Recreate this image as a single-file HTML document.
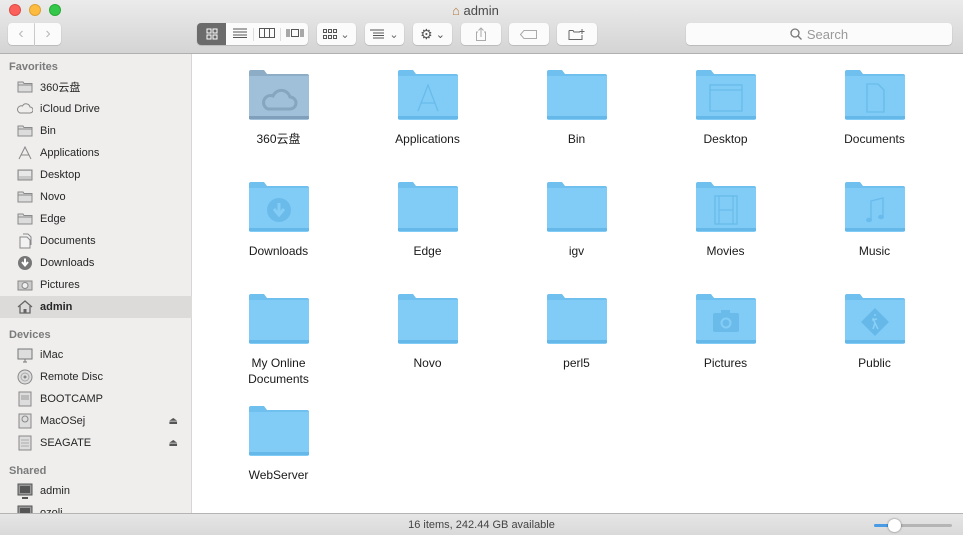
<!DOCTYPE html>
<html><head><meta charset="utf-8"><style>
*{margin:0;padding:0;box-sizing:border-box}
body{width:963px;height:535px;overflow:hidden;font-family:"Liberation Sans","Noto Sans CJK SC",sans-serif;background:#fff;position:relative;color:#222}
.tb{position:absolute;left:0;top:0;width:963px;height:54px;background:linear-gradient(#ebebeb,#d4d4d4);border-bottom:1px solid #b0b0b0}
.dot{position:absolute;top:4px;width:12px;height:12px;border-radius:50%}
.title{position:absolute;top:3px;left:452px;font-size:13px;color:#4a4a4a}
.btn{position:absolute;top:23px;height:22px;background:#fbfbfb;border-radius:4px;box-shadow:0 0.5px 1px rgba(0,0,0,.25);display:flex;align-items:center;justify-content:center;color:#666;font-size:11px}
.side{position:absolute;left:0;top:54px;width:192px;height:459px;background:#efeeed;border-right:1px solid #d6d6d6;font-size:11px}
.hd{position:absolute;left:9px;color:#7b7b7b;font-weight:bold;font-size:11px}
.it{position:absolute;left:0;width:192px;height:22px;display:flex;align-items:center;padding-left:40px;color:#262626}
.it svg{position:absolute;left:17px;top:3px}
.sel{background:#dcdbda;font-weight:bold}
.ej{position:absolute;right:14px;font-size:10px;color:#555}
.f{position:absolute;width:149px;text-align:center;font-size:12px;color:#1a1a1a;line-height:16px}
.f svg{display:block;margin:0 auto 10px}
.status{position:absolute;left:0;top:513px;width:963px;height:22px;background:linear-gradient(#e6e6e6,#d9d9d9);border-top:1px solid #b4b4b4;font-size:11px;color:#444;text-align:center;line-height:23px}
</style></head><body>
<svg width="0" height="0" style="position:absolute"><defs>
<symbol id="fd" viewBox="0 0 62 52"><path d="M1 3a2 2 0 0 1 2-2h13l3 4h40a2 2 0 0 1 2 2v4H1z" fill="#6fc0ee"/><path d="M1 7h60v42a2 2 0 0 1-2 2H3a2 2 0 0 1-2-2z" fill="#80ccf6"/><rect x="1" y="47" width="60" height="3" fill="#66b8e8"/></symbol>
<symbol id="fg" viewBox="0 0 62 52"><path d="M1 3a2 2 0 0 1 2-2h13l3 4h40a2 2 0 0 1 2 2v4H1z" fill="#8dacc6"/><path d="M1 7h60v42a2 2 0 0 1-2 2H3a2 2 0 0 1-2-2z" fill="#a0bfd9"/><rect x="1" y="47" width="60" height="3" fill="#7f9fba"/></symbol>
<symbol id="sf" viewBox="0 0 16 16"><path d="M1 3h5l1 1.5h8V13H1z" fill="#dcdcdc" stroke="#8a8a8a" stroke-width="1"/><line x1="1" y1="6" x2="15" y2="6" stroke="#8a8a8a"/></symbol>
</defs></svg>

<div class="tb">
<div class="dot" style="left:9px;background:#fc605b;border:1px solid #de4b45"></div>
<div class="dot" style="left:29px;background:#fdbc40;border:1px solid #dea032"></div>
<div class="dot" style="left:49px;background:#34c84a;border:1px solid #27aa35"></div>
<div class="title"><span style="color:#b57a3c">&#8962;</span> admin</div>
<div class="btn" style="left:8px;width:26px;border-radius:4px 0 0 4px;color:#bbb;font-size:16px">&#8249;</div>
<div class="btn" style="left:35px;width:26px;border-radius:0 4px 4px 0;color:#bbb;font-size:16px">&#8250;</div>
<div class="btn" style="left:197px;width:111px;justify-content:flex-start;overflow:hidden">
 <div style="width:29px;height:22px;background:#6b6b6b;display:flex;align-items:center;justify-content:center"><svg width="12" height="12"><rect x="1" y="1" width="4" height="4" fill="none" stroke="#fff"/><rect x="7" y="1" width="4" height="4" fill="none" stroke="#fff"/><rect x="1" y="7" width="4" height="4" fill="none" stroke="#fff"/><rect x="7" y="7" width="4" height="4" fill="none" stroke="#fff"/></svg></div>
 <div style="width:27px;text-align:center"><svg width="14" height="10"><path d="M0 1h14M0 4h14M0 7h14M0 9.5h14" stroke="#555"/></svg></div>
 <div style="width:27px;text-align:center;border-left:1px solid #ddd"><svg width="16" height="10"><rect x="0.5" y="0.5" width="15" height="9" fill="none" stroke="#555"/><path d="M5.5 0v10M10.5 0v10" stroke="#555"/></svg></div>
 <div style="width:28px;text-align:center;border-left:1px solid #ddd"><svg width="18" height="10"><path d="M1 1v8M3 1v8M15 1v8M17 1v8" stroke="#555"/><rect x="5.5" y="1.5" width="7" height="7" fill="none" stroke="#555"/></svg></div>
</div>
<div class="btn" style="left:317px;width:39px"><svg width="14" height="11"><g fill="none" stroke="#555"><rect x="0.5" y="0.5" width="3" height="3"/><rect x="5.5" y="0.5" width="3" height="3"/><rect x="10.5" y="0.5" width="3" height="3"/><rect x="0.5" y="6.5" width="3" height="3"/><rect x="5.5" y="6.5" width="3" height="3"/><rect x="10.5" y="6.5" width="3" height="3"/></g></svg>&nbsp;&#8964;</div>
<div class="btn" style="left:365px;width:39px"><svg width="16" height="10"><path d="M0 1h14M3 4h11M3 6.5h11M3 9h11" stroke="#555"/></svg>&nbsp;&#8964;</div>
<div class="btn" style="left:413px;width:39px;font-size:14px;color:#555">&#9881;<span style="font-size:11px">&nbsp;&#8964;</span></div>
<div class="btn" style="left:461px;width:40px"><svg width="12" height="14"><path d="M3 5H1.5v8.5h9V5H9M6 10V1M3.5 3.5L6 1l2.5 2.5" fill="none" stroke="#aaa"/></svg></div>
<div class="btn" style="left:509px;width:40px"><svg width="18" height="9"><path d="M4 .5h12.5v8H4L.5 4.5z" fill="none" stroke="#aaa"/></svg></div>
<div class="btn" style="left:557px;width:40px"><svg width="18" height="12"><path d="M1 2.5h4l1 1.5h6M1 2.5v9h13V7" fill="none" stroke="#666"/><path d="M14 1v5M11.5 3.5h5" stroke="#666"/></svg></div>
<div class="btn" style="left:686px;width:266px;font-size:13px;color:#999"><svg width="12" height="12" style="margin-right:5px"><circle cx="5" cy="5" r="4" fill="none" stroke="#777" stroke-width="1.3"/><path d="M8 8l3.5 3.5" stroke="#777" stroke-width="1.3"/></svg>Search</div>
</div>

<div class="side">
<div class="hd" style="top:7px">Favorites</div>
<div class="it" style="top:22px"><svg width="16" height="16"><use href="#sf"/></svg>360云盘</div>
<div class="it" style="top:44px"><svg width="16" height="16"><path d="M3 12h10a3 3 0 0 0 0-6 4 4 0 0 0-7.5-1A3.5 3.5 0 0 0 3 12z" fill="none" stroke="#888"/></svg>iCloud Drive</div>
<div class="it" style="top:66px"><svg width="16" height="16"><use href="#sf"/></svg>Bin</div>
<div class="it" style="top:88px"><svg width="16" height="16"><path d="M2 14L8 2l6 12M4 10h8" fill="none" stroke="#888"/></svg>Applications</div>
<div class="it" style="top:110px"><svg width="16" height="16"><rect x="1" y="3" width="14" height="10" fill="#c8c8c8" stroke="#888"/><rect x="2" y="4" width="12" height="5" fill="#e8e8e8"/></svg>Desktop</div>
<div class="it" style="top:132px"><svg width="16" height="16"><use href="#sf"/></svg>Novo</div>
<div class="it" style="top:154px"><svg width="16" height="16"><use href="#sf"/></svg>Edge</div>
<div class="it" style="top:176px"><svg width="16" height="16"><path d="M3 4h7l3 3v8H3z M6 1h5l3 3v8" fill="#f2f2f2" stroke="#888"/></svg>Documents</div>
<div class="it" style="top:198px"><svg width="16" height="16"><circle cx="8" cy="8" r="7" fill="#777"/><path d="M8 3.5v6M5 7l3 3.5L11 7" fill="none" stroke="#fff" stroke-width="2"/></svg>Downloads</div>
<div class="it" style="top:220px"><svg width="16" height="16"><rect x="1" y="4" width="14" height="9" fill="#ccc" stroke="#888"/><circle cx="8" cy="8.5" r="3" fill="#eee" stroke="#888"/></svg>Pictures</div>
<div class="it sel" style="top:242px"><svg width="16" height="16"><path d="M1 8L8 2l7 6M3 7v7h10V7" fill="none" stroke="#666" stroke-width="1.3"/><rect x="6.5" y="10" width="3" height="4" fill="#666"/></svg>admin</div>
<div class="hd" style="top:275px">Devices</div>
<div class="it" style="top:290px"><svg width="16" height="16"><rect x="1" y="2" width="14" height="10" fill="#ddd" stroke="#777"/><path d="M6 15h4M8 12v3" stroke="#777"/></svg>iMac</div>
<div class="it" style="top:312px"><svg width="16" height="16"><circle cx="8" cy="8" r="7" fill="#ddd" stroke="#888"/><circle cx="8" cy="8" r="4" fill="none" stroke="#aaa"/><circle cx="8" cy="8" r="1.5" fill="#888"/></svg>Remote Disc</div>
<div class="it" style="top:334px"><svg width="16" height="16"><rect x="2" y="1" width="12" height="14" fill="#ddd" stroke="#888"/><rect x="4" y="4" width="8" height="5" fill="#bbb"/></svg>BOOTCAMP</div>
<div class="it" style="top:356px"><svg width="16" height="16"><rect x="2" y="1" width="12" height="14" fill="#ddd" stroke="#888"/><circle cx="8" cy="6" r="3" fill="none" stroke="#888"/></svg>MacOSej<span class="ej">&#9167;</span></div>
<div class="it" style="top:378px"><svg width="16" height="16"><rect x="2" y="1" width="12" height="14" fill="#ddd" stroke="#888"/><path d="M4 5h8M4 8h8M4 11h8" stroke="#aaa"/></svg>SEAGATE<span class="ej">&#9167;</span></div>
<div class="hd" style="top:411px">Shared</div>
<div class="it" style="top:426px"><svg width="16" height="16"><rect x="1" y="1" width="14" height="11" fill="#999" stroke="#555"/><rect x="3" y="3" width="10" height="7" fill="#555"/><path d="M5 15h6" stroke="#555" stroke-width="2"/></svg>admin</div>
<div class="it" style="top:448px"><svg width="16" height="16"><rect x="1" y="1" width="14" height="11" fill="#999" stroke="#555"/><rect x="3" y="3" width="10" height="7" fill="#555"/></svg>ozoli</div>
</div>

<div class="f" style="left:204px;top:69px"><svg width="62" height="52"><use href="#fg"/><path d="M20 40h22a6 6 0 0 0 0-12 9 9 0 0 0-17-1 6.5 6.5 0 0 0-5 13z" fill="none" stroke="#86a5bf" stroke-width="3"/></svg>360云盘</div>
<div class="f" style="left:353px;top:69px"><svg width="62" height="52"><use href="#fd"/><path d="M21 42L31 16l10 26M24 34h14" fill="none" stroke="#68bbea" stroke-width="1.3"/></svg>Applications</div>
<div class="f" style="left:502px;top:69px"><svg width="62" height="52"><use href="#fd"/></svg>Bin</div>
<div class="f" style="left:651px;top:69px"><svg width="62" height="52"><use href="#fd"/><rect x="15" y="16" width="32" height="26" fill="none" stroke="#68bbea" stroke-width="1.3"/><path d="M15 21h32" stroke="#68bbea" stroke-width="1.3"/></svg>Desktop</div>
<div class="f" style="left:800px;top:69px"><svg width="62" height="52"><use href="#fd"/><path d="M23 15h11l6 6v22H23z" fill="none" stroke="#68bbea" stroke-width="1.3"/></svg>Documents</div>
<div class="f" style="left:204px;top:181px"><svg width="62" height="52"><use href="#fd"/><circle cx="31" cy="29" r="12" fill="#6abbea"/><path d="M31 22v10M26 28l5 6 5-6" fill="none" stroke="#84cdf6" stroke-width="3"/></svg>Downloads</div>
<div class="f" style="left:353px;top:181px"><svg width="62" height="52"><use href="#fd"/></svg>Edge</div>
<div class="f" style="left:502px;top:181px"><svg width="62" height="52"><use href="#fd"/></svg>igv</div>
<div class="f" style="left:651px;top:181px"><svg width="62" height="52"><use href="#fd"/><rect x="20" y="15" width="22" height="28" fill="none" stroke="#68bbea" stroke-width="1.3"/><path d="M24 15v28M38 15v28M24 29h14" stroke="#68bbea" stroke-width="1.2"/></svg>Movies</div>
<div class="f" style="left:800px;top:181px"><svg width="62" height="52"><use href="#fd"/><path d="M27 39V20l12-3v18" fill="none" stroke="#68bbea" stroke-width="1.3"/><ellipse cx="25" cy="39" rx="3" ry="2.2" fill="#68bbea"/><ellipse cx="37" cy="36" rx="3" ry="2.2" fill="#68bbea"/></svg>Music</div>
<div class="f" style="left:204px;top:293px"><svg width="62" height="52"><use href="#fd"/></svg>My Online<br>Documents</div>
<div class="f" style="left:353px;top:293px"><svg width="62" height="52"><use href="#fd"/></svg>Novo</div>
<div class="f" style="left:502px;top:293px"><svg width="62" height="52"><use href="#fd"/></svg>perl5</div>
<div class="f" style="left:651px;top:293px"><svg width="62" height="52"><use href="#fd"/><rect x="18" y="20" width="26" height="19" rx="2" fill="#6abbea"/><rect x="26" y="17" width="9" height="4" fill="#6abbea"/><circle cx="31" cy="30" r="5.5" fill="#84cdf6"/><circle cx="31" cy="30" r="3.5" fill="#6abbea"/></svg>Pictures</div>
<div class="f" style="left:800px;top:293px"><svg width="62" height="52"><use href="#fd"/><path d="M31 15l14 14-14 14-14-14z" fill="#66b8e8"/><path d="M31 21v2M29 25l2 5-2 6M31 30l3 6M28 27l5-1" stroke="#8ad0f7" stroke-width="1.5" fill="none"/></svg>Public</div>
<div class="f" style="left:204px;top:405px"><svg width="62" height="52"><use href="#fd"/></svg>WebServer</div>

<div class="status">16 items, 242.44 GB available
<div style="position:absolute;left:874px;top:10px;width:78px;height:3px;background:#b5b5b5;border-radius:2px"></div>
<div style="position:absolute;left:874px;top:10px;width:20px;height:3px;background:#4a9be6;border-radius:2px"></div>
<div style="position:absolute;left:888px;top:5px;width:13px;height:13px;background:#fff;border-radius:50%;box-shadow:0 0 2px rgba(0,0,0,.5)"></div>
</div>
</body></html>
